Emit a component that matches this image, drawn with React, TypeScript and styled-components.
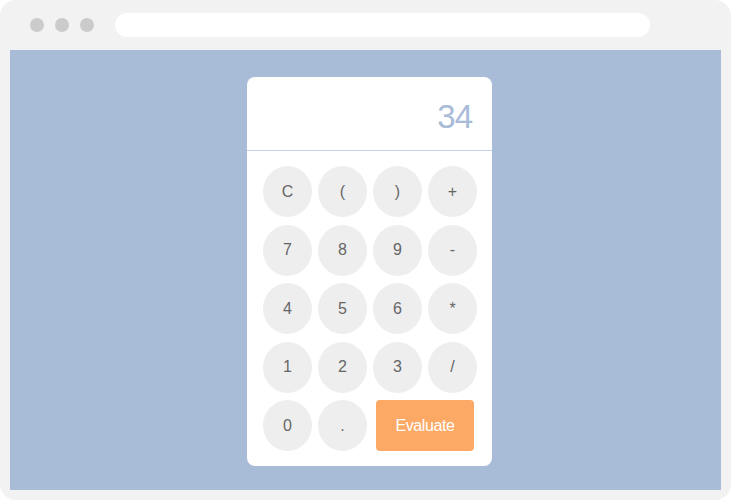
import React, { useState } from "react";
import styled, { createGlobalStyle } from "styled-components";

const GlobalStyle = createGlobalStyle`
  html, body {
    margin: 0;
    padding: 0;
    background: #ffffff;
    font-family: "Liberation Sans", Arial, sans-serif;
  }
`;

const keys = ["C", "(", ")", "+", "7", "8", "9", "-", "4", "5", "6", "*", "1", "2", "3", "/", "0", "."];

function App() {
  const [value, setValue] = useState("34");

  const press = (k: string) => {
    if (k === "C") return setValue("");
    setValue((v) => v + k);
  };

  const evaluate = () => {
    try {
      // eslint-disable-next-line no-new-func
      setValue(String(Function(`return (${value})`)()));
    } catch (e) {
      setValue("Error");
    }
  };

  return (
    <Frame>
      <GlobalStyle />
      <TopBar>
        <Dots>
          <Dot />
          <Dot />
          <Dot />
        </Dots>
        <Address />
      </TopBar>
      <Viewport>
        <Calculator>
          <Display>{value}</Display>
          <Keypad>
            {keys.map((k) => (
              <Key key={k} onClick={() => press(k)}>
                {k}
              </Key>
            ))}
            <EvalButton onClick={evaluate}>Evaluate</EvalButton>
          </Keypad>
        </Calculator>
      </Viewport>
    </Frame>
  );
}

const Frame = styled.div`
  width: 731px;
  height: 500px;
  box-sizing: border-box;
  background: #f2f2f2;
  border-radius: 16px;
  padding: 0 10px 10px 10px;
  display: flex;
  flex-direction: column;
`;

const TopBar = styled.div`
  height: 50px;
  display: flex;
  align-items: center;
  padding-left: 20px;
  box-sizing: border-box;
`;

const Dots = styled.div`
  display: flex;
  gap: 11px;
`;

const Dot = styled.span`
  width: 14px;
  height: 14px;
  border-radius: 50%;
  background: #cbcbcb;
`;

const Address = styled.div`
  margin-left: 21px;
  width: 535px;
  height: 24px;
  border-radius: 12px;
  background: #ffffff;
`;

const Viewport = styled.div`
  flex: 1;
  background: #a8bbd7;
  display: flex;
  justify-content: center;
  align-items: flex-start;
  padding: 27px 0 0 8px;
`;

const Calculator = styled.div`
  width: 245px;
  background: #ffffff;
  border-radius: 8px;
  overflow: hidden;
`;

const Display = styled.div`
  height: 74px;
  border-bottom: 1px solid #c3d2e8;
  box-sizing: border-box;
  display: flex;
  align-items: center;
  justify-content: flex-end;
  padding: 6px 20px 0 20px;
  font-size: 33px;
  letter-spacing: -1px;
  color: #a8bbd7;
`;

const Keypad = styled.div`
  display: grid;
  grid-template-columns: repeat(4, 49px);
  grid-auto-rows: 51px;
  column-gap: 6px;
  row-gap: 7.5px;
  padding: 15px 15px 15px 16px;
`;

const Key = styled.button`
  border: none;
  padding: 0;
  border-radius: 50%;
  background: #eeeeee;
  color: #666666;
  font-family: "Liberation Sans", Arial, sans-serif;
  font-size: 16px;
  cursor: pointer;
`;

const EvalButton = styled.button`
  grid-column: span 2;
  justify-self: center;
  width: 98px;
  border: none;
  border-radius: 4px;
  background: #fca966;
  color: #ffffff;
  font-family: "Liberation Sans", Arial, sans-serif;
  font-size: 16px;
  letter-spacing: -0.4px;
  cursor: pointer;
`;

export default App;
